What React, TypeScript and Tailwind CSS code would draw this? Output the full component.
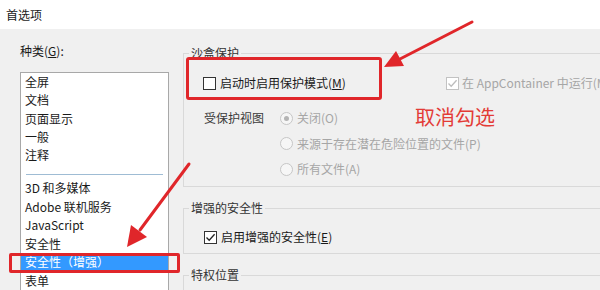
import type { ReactNode } from "react";

const font = "font-['Noto_Sans_CJK_SC','Microsoft_YaHei',sans-serif]";

function CheckBox({ checked, disabled }: { checked?: boolean; disabled?: boolean }) {
  return (
    <span
      className={`flex h-[13px] w-[13px] shrink-0 items-center justify-center border bg-white ${
        disabled ? "border-[#c2c2c2] bg-[#f7f7f7]" : "border-[#333333]"
      }`}
    >
      {checked ? (
        <svg width="11" height="11" viewBox="0 0 11 11">
          <polyline
            points="1.5,5.5 4.2,8.3 9.6,2.2"
            fill="none"
            stroke={disabled ? "#bdbdbd" : "#222222"}
            strokeWidth="1.3"
          />
        </svg>
      ) : null}
    </span>
  );
}

function Radio({ checked }: { checked?: boolean }) {
  return (
    <span className="flex h-[13px] w-[13px] shrink-0 items-center justify-center rounded-full border border-[#c6c6c6] bg-[#f6f6f6]">
      {checked ? <span className="h-[5px] w-[5px] rounded-full bg-[#b4b4b4]" /> : null}
    </span>
  );
}

function Group({ title, className, children }: { title: string; className?: string; children: ReactNode }) {
  return (
    <fieldset className={`border-y border-l border-[#d9d9d9] ${className ?? ""}`}>
      <legend className="ml-[5px] px-[2px] text-[12px] leading-[16px] text-[#333333]">{title}</legend>
      {children}
    </fieldset>
  );
}

const topItems = ["全屏", "文档", "页面显示", "一般", "注释"];
const bottomItems = ["3D 和多媒体", "Adobe 联机服务", "JavaScript", "安全性", "安全性（增强）", "表单"];

export default function App() {
  return (
    <div className={`relative h-[290px] w-[600px] overflow-hidden bg-[#f0f0f0] text-[#1a1a1a] ${font}`}>
      <div className="flex h-[29px] items-center bg-white pl-[6px] text-[12px]">首选项</div>

      <div className="flex h-[261px]">
        <div className="w-[183px] shrink-0 pl-[20px]">
          <p className="pt-[14px] text-[12px] leading-[16px]">
            种类(<span className="underline">G</span>):
          </p>
          <div className="mt-[13px] h-[230px] w-[149px] border border-[#a8a8a8] bg-white text-[12px]">
            {topItems.map((item) => (
              <div key={item} className="flex h-[18.3px] items-center pl-[4px]">
                {item}
              </div>
            ))}
            <div className="mx-[5px] mt-[9.5px] h-px bg-[#9fbcd4]" />
            <div className="pt-[4px]">
              {bottomItems.map((item) => (
                <div
                  key={item}
                  className={`flex h-[18.5px] items-center pl-[4px] ${
                    item === "安全性（增强）" ? "bg-[#3399ff] text-white" : ""
                  }`}
                >
                  {item}
                </div>
              ))}
            </div>
          </div>
        </div>

        <div className="w-[430px] shrink-0 text-[12px]">
          <Group title="沙盒保护" className="mt-[16px] pb-[8px]">
            <div className="mt-[13px] flex h-[18px] items-center pl-[19px]">
              <label className="flex w-[243px] items-center gap-[4px]">
                <CheckBox />
                <span>
                  启动时启用保护模式(<span className="underline">M</span>)
                </span>
              </label>
              <label className="flex items-center gap-[3px] whitespace-nowrap text-[#a6a6a6]">
                <CheckBox checked disabled />
                <span>在 AppContainer 中运行(M)</span>
              </label>
            </div>
            <div className="mt-[17px] flex pl-[20px]">
              <span className="flex h-[18px] w-[76px] items-center text-[#3a3a3a]">受保护视图</span>
              <div className="flex flex-col gap-[7.5px] text-[#a6a6a6]">
                <label className="flex h-[18px] items-center gap-[4px]">
                  <Radio checked />
                  关闭(O)
                </label>
                <label className="flex h-[18px] items-center gap-[4px]">
                  <Radio />
                  来源于存在潜在危险位置的文件(P)
                </label>
                <label className="flex h-[18px] items-center gap-[4px]">
                  <Radio />
                  所有文件(A)
                </label>
              </div>
            </div>
          </Group>

          <Group title="增强的安全性" className="mt-[13px] pb-[7px]">
            <label className="mt-[12px] flex h-[18px] items-center gap-[4px] pl-[20px]">
              <CheckBox checked />
              <span>
                启用增强的安全性(<span className="underline">E</span>)
              </span>
            </label>
          </Group>

          <Group title="特权位置" className="mt-[13px] h-[40px]">
            <div />
          </Group>
        </div>
      </div>

      {/* annotations */}
      <div className="absolute left-[186px] top-[57px] h-[43px] w-[196px] rounded-[3px] border-[3px] border-[#e0262a]" />
      <div className="absolute left-[9px] top-[253px] h-[20px] w-[171px] rounded-[2px] border-[3px] border-[#e0262a]" />
      <p className="absolute left-[415px] top-[104px] text-[20px] leading-[26px] text-[#e33b36]">取消勾选</p>
      <svg className="pointer-events-none absolute left-0 top-0" width="600" height="290" viewBox="0 0 600 290">
        <line x1="472" y1="22" x2="398" y2="60" stroke="#e0262a" strokeWidth="3" strokeLinecap="round" />
        <polygon points="384,67 404,66 396,51" fill="#e0262a" />
        <line x1="189" y1="164" x2="140" y2="230" stroke="#e0262a" strokeWidth="3" strokeLinecap="round" />
        <polygon points="127,247 147,237 131,225" fill="#e0262a" />
      </svg>
    </div>
  );
}
